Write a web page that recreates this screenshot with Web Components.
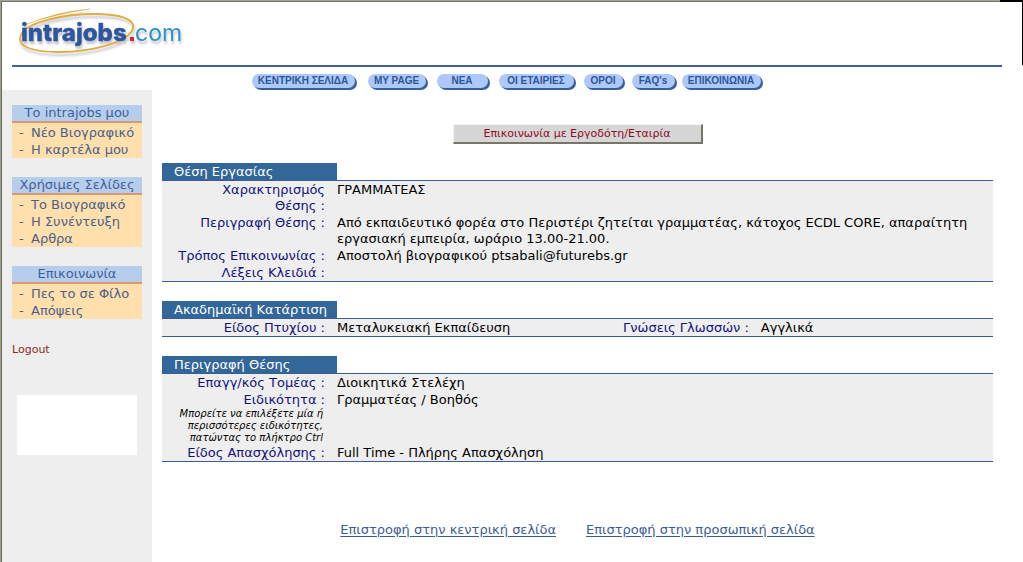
<!DOCTYPE html>
<html lang="el">
<head>
<meta charset="utf-8">
<meta name="viewport" content="width=device-width, initial-scale=1">
<title>intrajobs.com</title>
<style>
  body { margin: 0; background: #fff; font: 13px/16px "DejaVu Sans", Verdana, sans-serif; color: #000; }
</style>
</head>
<body>
<app-frame>
  <site-header slot="header"></site-header>
  <nav-bar slot="nav">
    <nav-pill style="--w:105px">ΚΕΝΤΡΙΚΗ ΣΕΛΙΔΑ</nav-pill>
    <nav-pill style="--w:60px">MY PAGE</nav-pill>
    <nav-pill style="--w:53px">ΝΕΑ</nav-pill>
    <nav-pill style="--w:77px">ΟΙ ΕΤΑΙΡΙΕΣ</nav-pill>
    <nav-pill style="--w:41px">ΟΡΟΙ</nav-pill>
    <nav-pill style="--w:45px">FAQ's</nav-pill>
    <nav-pill style="--w:81px">ΕΠΙΚΟΙΝΩΝΙΑ</nav-pill>
  </nav-bar>
  <side-bar slot="side">
    <side-menu heading="Το intrajobs μου">
      <menu-link>Νέο Βιογραφικό</menu-link>
      <menu-link>Η καρτέλα μου</menu-link>
    </side-menu>
    <side-menu heading="Χρήσιμες Σελίδες">
      <menu-link>Το Βιογραφικό</menu-link>
      <menu-link>Η Συνέντευξη</menu-link>
      <menu-link>Αρθρα</menu-link>
    </side-menu>
    <side-menu heading="Επικοινωνία">
      <menu-link>Πες το σε Φίλο</menu-link>
      <menu-link>Απόψεις</menu-link>
    </side-menu>
  </side-bar>
  <contact-button>Επικοινωνία με Εργοδότη/Εταιρία</contact-button>
  <job-section heading="Θέση Εργασίας">
    <job-field label="Χαρακτηρισμός Θέσης&nbsp;:">ΓΡΑΜΜΑΤΕΑΣ</job-field>
    <job-field label="Περιγραφή Θέσης :">Από εκπαιδευτικό φορέα στο Περιστέρι ζητείται γραμματέας, κάτοχος ECDL CORE, απαραίτητη εργασιακή εμπειρία, ωράριο 13.00-21.00.</job-field>
    <job-field label="Τρόπος Επικοινωνίας :">Αποστολή βιογραφικού ptsabali@futurebs.gr</job-field>
    <job-field label="Λέξεις Κλειδιά :"></job-field>
  </job-section>
  <job-section heading="Ακαδημαϊκή Κατάρτιση" columns="2">
    <job-field label="Είδος Πτυχίου :">Μεταλυκειακή Εκπαίδευση</job-field>
    <job-field label="Γνώσεις Γλωσσών :">Αγγλικά</job-field>
  </job-section>
  <job-section heading="Περιγραφή Θέσης">
    <job-field label="Επαγγ/κός Τομέας :">Διοικητικά Στελέχη</job-field>
    <job-field label="Ειδικότητα :" note="Μπορείτε να επιλέξετε μία ή περισσότερες ειδικότητες, πατώντας το πλήκτρο Ctrl">Γραμματέας / Βοηθός</job-field>
    <job-field label="Είδος Απασχόλησης :">Full Time - Πλήρης Απασχόληση</job-field>
  </job-section>
  <return-links></return-links>
</app-frame>

<script>
function define(name, render) {
  customElements.define(name, class extends HTMLElement {
    constructor() {
      super();
      this.attachShadow({ mode: 'open' }).innerHTML = render(this);
    }
  });
}

define('app-frame', () => `
  <style>
    :host { display: flex; flex-direction: column; min-height: 100vh; box-sizing: border-box; border-left: 1px solid #a09f90; }
    .edge { display: flex; height: 2px; }
    .edge i { flex: 1; box-sizing: border-box; background: #77766c; border-top: 1px solid #a4a496; }
    .edge b { width: 23px; background: #000; }
    .page { flex: 1; display: flex; flex-direction: column; border-left: 1px solid #6c6b60; }
    .body { flex: 1; display: flex; }
    main { flex: 1; min-width: 0; padding: 34px 30px 24px 10px; display: flex; flex-direction: column; }
  </style>
  <div class="edge"><i></i><b></b></div>
  <div class="page">
    <slot name="header"></slot>
    <slot name="nav"></slot>
    <div class="body">
      <slot name="side"></slot>
      <main><slot></slot></main>
    </div>
  </div>`);

define('site-header', () => `
  <style>
    :host { display: block; }
    .top { height: 63px; border-right: 1px solid #000; }
    a { display: block; width: 200px; }
    svg { display: block; }
    .bar { height: 2px; margin: 0 21px 0 10px; background: #45628f; }
    text { font-family: Inter, "Liberation Sans", Arial, sans-serif; }
  </style>
  <header>
    <div class="top">
      <a href="#" aria-label="intrajobs.com">
        <svg width="200" height="60" viewBox="2 2 200 60">
          <defs>
            <filter id="s" x="-10%" y="-10%" width="120%" height="140%"><feDropShadow dx="1" dy="3" stdDeviation="1.2" flood-color="#556" flood-opacity=".35"/></filter>
          </defs>
          <g filter="url(#s)">
            <path d="M22 33C30 22 62 14 95 14C120 14 135 19 133 28C130 41 96 52 58 52C34 52 20 47 20 39C20 37 21 35 22 33" fill="none" stroke="#e0ad42" stroke-width="1.8"/>
            <path d="M24 25C40 19 62 11 90 9C64 13 44 18 24 25Z" fill="#e0ad42" stroke="#e0ad42" stroke-width=".4"/>
            <text x="21" y="41" font-size="24" font-weight="800" fill="#2f579f" stroke="#2f579f" stroke-width=".4">intrajobs</text>
            <rect x="130" y="37" width="4" height="4" fill="#d8203a"/>
            <text x="135" y="41" font-size="23" fill="#2d93c5">com</text>
          </g>
        </svg>
      </a>
    </div>
    <div class="bar"></div>
  </header>`);

define('nav-bar', () => `
  <style>
    :host { display: block; margin: 0 21px 0 10px; padding-top: 7px; }
    nav { display: grid; grid-template-columns: 116px 69px 62px 85px 48px 50px 81px; justify-content: center; height: 16px; }
  </style>
  <nav><slot></slot></nav>`);

define('nav-pill', () => `
  <style>
    :host { display: block; width: var(--w); }
    a { display: block; box-sizing: border-box; height: 14px; margin-right: 2px; border-radius: 7px; background: #adc9fb;
        box-shadow: 1px 1px #3c5f9c, 2px 2px #3c5f9c; color: #2f5596; text-align: center; text-decoration: none; white-space: nowrap;
        font: bold 10px/14px "Liberation Sans", Arial, sans-serif; }
  </style>
  <a href="#"><slot></slot></a>`);

define('side-bar', () => `
  <style>
    :host { display: block; box-sizing: border-box; width: 150px; flex: none; padding: 15px 10px; background: #eee; }
    aside { display: flex; flex-direction: column; gap: 19px; }
    .out { margin-top: 4px; color: #8f2a1c; font-size: 11px; text-decoration: none; align-self: flex-start; }
    .banner { height: 60px; margin: 18px 5px 0; background: #fff; }
  </style>
  <aside>
    <slot></slot>
    <a class="out" href="#">Logout</a>
    <div class="banner"></div>
  </aside>`);

define('side-menu', el => `
  <style>
    :host { display: block; background: #ffdfab; }
    h2 { margin: 0; font: inherit; text-align: center; color: #3e619c; background: #b7cdec; border-bottom: 2px solid #dc9870; }
    div { padding-top: 1px; }
  </style>
  <h2>${el.getAttribute('heading')}</h2>
  <div><slot></slot></div>`);

define('menu-link', () => `
  <style>
    :host { display: flex; padding-left: 7px; line-height: 17px; color: #48618d; }
    span { width: 12px; }
    a { color: inherit; text-decoration: none; white-space: nowrap; }
  </style>
  <span>-</span><a href="#"><slot></slot></a>`);

define('contact-button', () => `
  <style>
    :host { display: flex; justify-content: center; margin-bottom: 19px; }
    button { box-sizing: border-box; width: 250px; height: 20px; padding: 0; background: #d6d6d6; color: #8e0b25;
      font: 11px/16px "DejaVu Sans", Verdana, sans-serif; border: solid; border-width: 1px 2px 2px 1px; border-color: #f4f4f4 #77756a #77756a #f4f4f4; }
  </style>
  <button type="button"><slot></slot></button>`);

define('job-section', el => `
  <style>
    :host { display: block; margin-bottom: 19px; }
    header { border-bottom: 1px solid #3c5d92; }
    h2 { box-sizing: border-box; width: 175px; height: 17px; margin: 0; padding-left: 12px; background: #336699; color: #fff; font: inherit; line-height: 18px; white-space: nowrap; }
    .rows { display: grid; grid-template-columns: ${el.getAttribute('columns') === '2' ? '51% 49%' : '100%'}; background: #eee; border-bottom: 1px solid #3c5d92; }
  </style>
  <section>
    <header><h2>${el.getAttribute('heading')}</h2></header>
    <div class="rows"><slot></slot></div>
  </section>`);

define('job-field', el => `
  <style>
    :host { display: block; }
    dl { display: grid; grid-template-columns: 163px 1fr; column-gap: 12px; margin: 0; padding-top: 1px; }
    dt { padding-left: 12px; text-align: right; color: #13137c; }
    dd { margin: 0; padding-right: 12px; }
    small { display: block; font: italic 10px/12px "DejaVu Sans", Verdana, sans-serif; color: #000; padding-right: 2px; }
  </style>
  <dl>
    <dt>${el.getAttribute('label')}${el.hasAttribute('note') ? `<small>${el.getAttribute('note')}</small>` : ''}</dt>
    <dd><slot></slot></dd>
  </dl>`);

define('return-links', () => `
  <style>
    :host { display: flex; justify-content: center; gap: 30px; margin-top: 41px; }
    a { color: #3c5d92; text-underline-offset: 2px; white-space: nowrap; }
  </style>
  <a href="#">Επιστροφή στην κεντρική σελίδα</a>
  <a href="#">Επιστροφή στην προσωπική σελίδα</a>`);
</script>
</body>
</html>
